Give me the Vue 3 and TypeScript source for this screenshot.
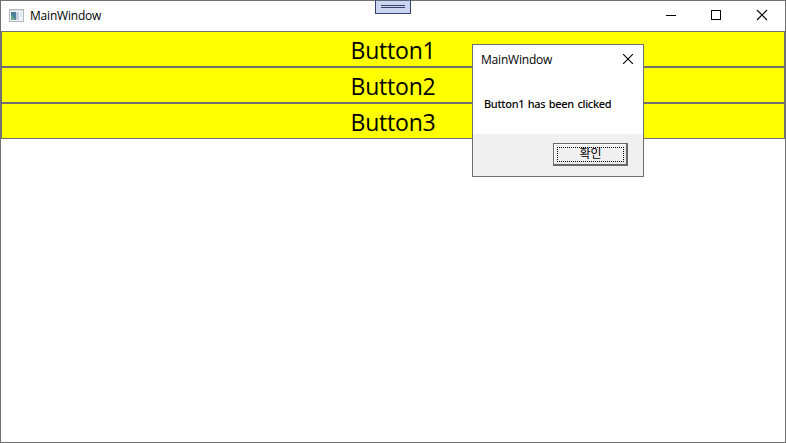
<script setup lang="ts">
import { ref } from 'vue'

const title = ref<string>('MainWindow')
const buttons: string[] = ['Button1', 'Button2', 'Button3']
const message = ref<string>('Button1 has been clicked')
</script>

<template>
  <div class="window">
    <header class="titlebar">
      <svg class="app-icon" width="16" height="13" viewBox="0 0 16 13">
        <rect x="0.5" y="0.5" width="14" height="12" fill="#f4f5f8" stroke="#b4b7bd" />
        <rect x="1" y="1" width="13" height="1" fill="#d9dce2" />
        <rect x="2" y="3" width="5" height="8" fill="#4a809a" />
        <path d="M2 11V6L7 11Z" fill="#68aa86" />
        <rect x="7" y="3" width="3" height="8" fill="#c3cfdf" />
        <rect x="11" y="3" width="2" height="5" fill="#dce7e5" />
      </svg>
      <h1 class="title">{{ title }}</h1>
      <nav class="controls">
        <svg width="46" height="30" viewBox="0 0 46 30" shape-rendering="crispEdges">
          <path d="M18 14.5H28" stroke="#000" />
        </svg>
        <svg width="45" height="30" viewBox="0 0 45 30" shape-rendering="crispEdges">
          <rect x="17.5" y="9.5" width="9" height="9" fill="none" stroke="#000" />
        </svg>
        <svg width="46" height="30" viewBox="0 0 46 30">
          <path d="M18 9L28 19M28 9L18 19" stroke="#000" stroke-width="1.1" />
        </svg>
      </nav>
      <div class="debug-handle"><i></i><i></i></div>
    </header>
    <main class="stack">
      <button v-for="label in buttons" :key="label" class="yellow"><span>{{ label }}</span></button>
    </main>
    <section class="dialog">
      <header class="dialog-head">
        <h2 class="title">{{ title }}</h2>
        <svg width="10" height="10" viewBox="0 0 10 10">
          <path d="M0 0L10 10M10 0L0 10" stroke="#000" stroke-width="1.1" />
        </svg>
      </header>
      <p class="message">{{ message }}</p>
      <footer class="dialog-foot">
        <button class="ok"><span class="focus">확인</span></button>
      </footer>
    </section>
  </div>
</template>

<style>
body {
  margin: 0;
  overflow: hidden;
}
</style>

<style scoped>
* {
  box-sizing: border-box;
}
.window {
  position: relative;
  width: 786px;
  height: 443px;
  border: 1px solid #707070;
  background: #fff;
  color: #000;
  font-family: 'Open Sans', 'Noto Sans CJK KR', sans-serif;
}
.titlebar {
  height: 30px;
  display: flex;
  align-items: flex-start;
}
.app-icon {
  margin: 8px 5px 0 8px;
}
.title {
  margin: 0;
  font-size: 12px;
  line-height: 16px;
  font-weight: 400;
  letter-spacing: -0.2px;
}
.titlebar .title {
  margin-top: 7px;
}
.controls {
  display: flex;
  margin-left: auto;
}
.debug-handle {
  position: absolute;
  left: 374px;
  top: -1px;
  width: 36px;
  height: 14px;
  padding: 4px 5px 0;
  display: flex;
  flex-direction: column;
  gap: 1px;
  border: 1px solid #35406f;
  border-top-color: #606680;
  background: #ccd5f0;
}
.debug-handle i {
  height: 1px;
  background: #35406f;
}
.stack {
  display: flex;
  flex-direction: column;
}
.yellow {
  height: 36px;
  padding: 2px 0 0;
  display: flex;
  justify-content: center;
  border: 1px solid #707070;
  border-radius: 0;
  background: #ff0;
  color: #000;
  font-family: inherit;
  font-size: 23px;
  line-height: 32px;
  letter-spacing: -0.2px;
}
.dialog {
  position: absolute;
  left: 471px;
  top: 43px;
  width: 172px;
  height: 133px;
  display: flex;
  flex-direction: column;
  border: 1px solid #707070;
  background: #fff;
}
.dialog-head {
  height: 40px;
  padding: 7px 10px 0 8px;
  display: flex;
  justify-content: space-between;
}
.dialog-head svg {
  margin-top: 2px;
}
.message {
  margin: 0;
  height: 49px;
  padding: 11px 0 0 11px;
  font-family: 'Noto Sans', sans-serif;
  font-size: 11px;
  line-height: 16px;
  font-weight: 500;
  letter-spacing: -0.32px;
  word-spacing: 1px;
  white-space: nowrap;
}
.dialog-foot {
  flex: 1;
  padding: 9px 15px 0 0;
  display: flex;
  justify-content: flex-end;
  align-items: flex-start;
  background: #f0f0f0;
}
.ok {
  width: 75px;
  height: 23px;
  padding: 3px 2px 2px 3px;
  display: flex;
  border: 1px solid #696969;
  border-right-width: 2px;
  border-bottom-width: 2px;
  border-radius: 0;
  background: #f0f0f0;
  box-shadow: inset 1px 1px #fff, inset -1px -1px #e3e3e3;
  color: #000;
  font-family: 'Noto Sans CJK KR', sans-serif;
}
.focus {
  flex: 1;
  border: 1px dotted #000;
  font-size: 12px;
  font-weight: 400;
  line-height: 10px;
  text-align: center;
}
</style>
